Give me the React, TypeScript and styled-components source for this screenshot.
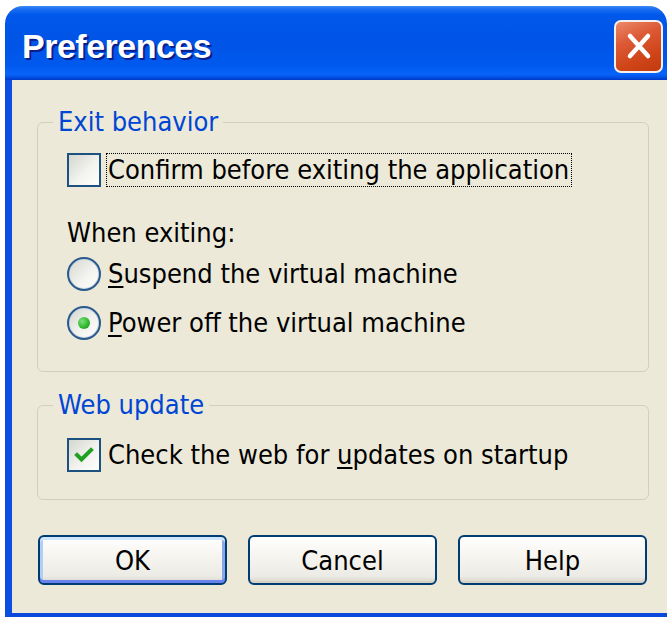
import React from "react";
import styled, { createGlobalStyle } from "styled-components";

const GlobalStyle = createGlobalStyle`
  html, body {
    margin: 0;
    padding: 0;
    background: #ffffff;
    overflow: hidden;
  }
  body {
    font-family: "DejaVu Sans Condensed", "DejaVu Sans", "Liberation Sans", sans-serif;
    font-stretch: condensed;
  }
`;

const Page = styled.div`
  padding: 6px 0 0 5px;
`;

/* The right edge of the dialog frame sits just outside the view, so the
   window is exactly as wide as what remains of the page. */
const Window = styled.div`
  width: 662px;
  display: flex;
  flex-direction: column;
  border-radius: 18px 18px 0 0;
  overflow: hidden;
  background: #ece9d8;
`;

const TitleBar = styled.div`
  height: 74px;
  box-sizing: border-box;
  padding: 6px 4px 0 17px;
  display: flex;
  align-items: center;
  justify-content: space-between;
  background: linear-gradient(
    180deg,
    #3b8bf5 0%,
    #1c6ef2 4%,
    #0058ea 12%,
    #0054e6 50%,
    #0059ee 80%,
    #0864fa 92%,
    #0452e6 96%,
    #0038c8 100%
  );
`;

const Title = styled.div`
  font-family: "Liberation Sans", Arial, sans-serif;
  font-stretch: normal;
  font-weight: bold;
  font-size: 34px;
  letter-spacing: -0.5px;
  color: #ffffff;
  text-shadow: 2px 2px 0 #0a1e8a;
`;

const CloseButton = styled.div`
  width: 49px;
  height: 53px;
  box-sizing: border-box;
  border: 2px solid #f4f0ee;
  border-radius: 7px;
  background: linear-gradient(155deg, #ec8a6a 0%, #dc5a36 35%, #cf4518 70%, #c13a10 100%);
  display: flex;
  align-items: center;
  justify-content: center;
`;

const Frame = styled.div`
  border-left: 7px solid #0b4fe2;
  border-bottom: 7px solid #0a48dc;
  padding: 28px 0 28px 25px;
  display: flex;
  flex-direction: column;
  color: #000000;
  font-size: 27px;
`;

const Group = styled.fieldset<{ $padTop: number; $padBottom: number; $gap?: number }>`
  width: 612px;
  box-sizing: border-box;
  margin: ${(p) => p.$gap ?? 0}px 0 0 0;
  min-width: 0;
  border: 1px solid #d0d0bf;
  border-radius: 6px;
  padding: ${(p) => p.$padTop}px 0 ${(p) => p.$padBottom}px 29px;
  display: flex;
  flex-direction: column;
`;

const Legend = styled.legend`
  padding: 0 5px;
  margin-left: -14px;
  line-height: 28px;
  font-size: 27px;
  color: #0046d5;
`;

const Row = styled.div<{ $top?: number }>`
  display: flex;
  align-items: center;
  height: 34px;
  margin-top: ${(p) => p.$top ?? 0}px;
  white-space: nowrap;
`;

const CheckBox = styled.div`
  width: 34px;
  height: 34px;
  box-sizing: border-box;
  border: 2px solid #1c5180;
  background: linear-gradient(135deg, #d6d6d0 0%, #f2f2ee 55%, #ffffff 100%);
  display: flex;
  align-items: center;
  justify-content: center;
  flex: none;
`;

const RadioCircle = styled.div`
  width: 34px;
  height: 34px;
  box-sizing: border-box;
  border: 2px solid #2a5a8c;
  border-radius: 50%;
  background: linear-gradient(135deg, #d6d6d0 0%, #f2f2ee 55%, #ffffff 100%);
  box-shadow: inset 0 0 0 1px #c7d4e3;
  display: flex;
  align-items: center;
  justify-content: center;
  flex: none;
`;

const RadioDot = styled.div`
  width: 12px;
  height: 12px;
  border-radius: 50%;
  background: radial-gradient(circle at 35% 35%, #7ce07a 0%, #31b82f 55%, #1c8f1c 100%);
`;

const LabelText = styled.span<{ $focused?: boolean }>`
  margin-left: ${(p) => (p.$focused ? 5 : 7)}px;
  padding: ${(p) => (p.$focused ? "0 2px 0 1px" : "0")};
  border: ${(p) => (p.$focused ? "1px dotted #000000" : "none")};
  line-height: 32px;
`;

const PlainText = styled.span`
  line-height: 34px;
`;

const ButtonRow = styled.div`
  display: flex;
  gap: 21px;
  margin: 35px 0 0 1px;
`;

const Button = styled.div<{ $default?: boolean }>`
  width: 189px;
  height: 50px;
  box-sizing: border-box;
  border: 2px solid #003c74;
  border-radius: 6px;
  background: linear-gradient(180deg, #ffffff 0%, #f6f5f0 40%, #ecebe6 85%, #d9d4c8 100%);
  display: flex;
  align-items: center;
  justify-content: center;
  font-size: 27px;
  box-shadow: ${(p) =>
    p.$default
      ? "inset 0 3px 0 #cee7ff, inset 0 -3px 0 #6982ee, inset 3px 0 0 #b6cdf3, inset -3px 0 0 #8aa8e6"
      : "inset 0 -2px 0 #d6d0c5"};
`;

const Key = styled.u`
  text-decoration-thickness: 2px;
  text-underline-offset: 3px;
`;

function CheckMark() {
  return (
    <svg width="22" height="20" viewBox="0 0 22 20">
      <polyline
        points="4,10 8.5,14.5 18,5"
        fill="none"
        stroke="#21a121"
        strokeWidth="4"
        strokeLinecap="square"
      />
    </svg>
  );
}

function CloseGlyph() {
  return (
    <svg width="26" height="28" viewBox="0 0 26 28">
      <path d="M4 4 L22 24 M22 4 L4 24" stroke="#ffffff" strokeWidth="4.5" strokeLinecap="round" />
    </svg>
  );
}

export default function App() {
  return (
    <>
      <GlobalStyle />
      <Page>
        <Window>
          <TitleBar>
            <Title>Preferences</Title>
            <CloseButton>
              <CloseGlyph />
            </CloseButton>
          </TitleBar>
          <Frame>
            <Group $padTop={17} $padBottom={31}>
              <Legend>Exit behavior</Legend>
              <Row>
                <CheckBox />
                <LabelText $focused>Confirm before exiting the application</LabelText>
              </Row>
              <Row $top={29}>
                <PlainText>When exiting:</PlainText>
              </Row>
              <Row $top={7}>
                <RadioCircle />
                <LabelText>
                  <Key>S</Key>uspend the virtual machine
                </LabelText>
              </Row>
              <Row $top={15}>
                <RadioCircle>
                  <RadioDot />
                </RadioCircle>
                <LabelText>
                  <Key>P</Key>ower off the virtual machine
                </LabelText>
              </Row>
            </Group>
            <Group $padTop={19} $padBottom={27} $gap={19}>
              <Legend>Web update</Legend>
              <Row>
                <CheckBox>
                  <CheckMark />
                </CheckBox>
                <LabelText>
                  Check the web for <Key>u</Key>pdates on startup
                </LabelText>
              </Row>
            </Group>
            <ButtonRow>
              <Button $default>OK</Button>
              <Button>Cancel</Button>
              <Button>Help</Button>
            </ButtonRow>
          </Frame>
        </Window>
      </Page>
    </>
  );
}
